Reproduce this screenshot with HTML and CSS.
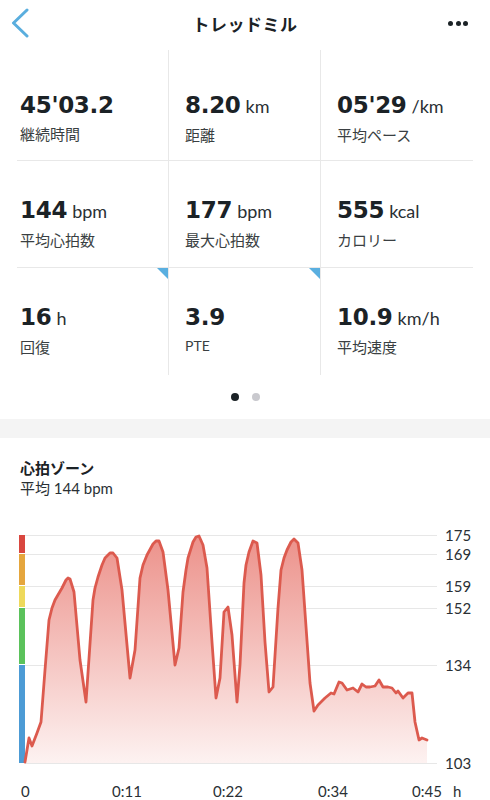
FILE: index.html
```html
<!DOCTYPE html>
<html>
  <head>
    <title>トレッドミル</title>
    <meta name="viewport" content="width=device-width, initial-scale=1" />
    <link rel="stylesheet" href="styles.css">
  </head>
  <body>
    <header class="topbar">
      <div class="back">
        <svg width="19" height="30" viewBox="0 0 19 30">
          <polyline points="16,2 2.5,15 16,28" fill="none" stroke="#5aaede" stroke-width="3" stroke-linecap="round" stroke-linejoin="round" />
        </svg>
      </div>
      <h1 class="title">トレッドミル</h1>
      <div class="more"><span></span><span></span><span></span></div>
    </header>

    <div class="stats">
      <div class="cell top"><div class="value">45'03.2</div><div class="label">継続時間</div></div>
      <div class="cell top"><div class="value">8.20<span class="unit">km</span></div><div class="label">距離</div></div>
      <div class="cell top last"><div class="value">05'29<span class="unit">/km</span></div><div class="label">平均ペース</div></div>

      <div class="cell"><div class="value">144<span class="unit">bpm</span></div><div class="label">平均心拍数</div></div>
      <div class="cell"><div class="value">177<span class="unit">bpm</span></div><div class="label">最大心拍数</div></div>
      <div class="cell last"><div class="value">555<span class="unit">kcal</span></div><div class="label">カロリー</div></div>

      <div class="cell bottom flag"><div class="value">16<span class="unit">h</span></div><div class="label">回復</div></div>
      <div class="cell bottom flag"><div class="value">3.9</div><div class="label latin">PTE</div></div>
      <div class="cell bottom last"><div class="value">10.9<span class="unit">km/h</span></div><div class="label">平均速度</div></div>
    </div>

    <div class="pager"><span class="dot on"></span><span class="dot"></span></div>
    <div class="band"></div>

    <section class="zones">
      <h2 class="zones-title">心拍ゾーン</h2>
      <div class="zones-sub">平均 144 bpm</div>
    </section>

    <svg class="chart" width="490" height="300" viewBox="0 500 490 300">
      <defs>
        <linearGradient id="fill" gradientUnits="userSpaceOnUse" x1="0" y1="535" x2="0" y2="763">
          <stop offset="0" stop-color="#ec918a" />
          <stop offset="1" stop-color="#fdf2f1" />
        </linearGradient>
      </defs>

      <!-- grid lines -->
      <g stroke="#e7e7e7" stroke-width="1">
        <line x1="25" y1="535.5" x2="437" y2="535.5" />
        <line x1="25" y1="554.5" x2="437" y2="554.5" />
        <line x1="25" y1="586.5" x2="437" y2="586.5" />
        <line x1="25" y1="608.5" x2="437" y2="608.5" />
        <line x1="25" y1="665.5" x2="437" y2="665.5" />
        <line x1="25" y1="763.5" x2="437" y2="763.5" />
      </g>

      <!-- zone bar -->
      <rect x="19" y="535" width="6" height="18" fill="#d9473f" />
      <rect x="19" y="554" width="6" height="31" fill="#e5a63d" />
      <rect x="19" y="586" width="6" height="21" fill="#eed95b" />
      <rect x="19" y="608" width="6" height="56" fill="#5bc25b" />
      <rect x="19" y="665" width="6" height="98" fill="#4c9bd5" />

      <polygon fill="url(#fill)" points="25,762 29,738 32,746 37,733 41,722 45,670 49,620 52,608 55,600 62,588 66,580 68,578 70,579 74,592 80,660 86,702 93,600 95,588 98,577 102,565 105,558 110,553 113,553 117,558 122,590 130,678 135,650 140,578 143,565 147,555 153,544 156,541 159,541 163,552 168,590 175,665 179,648 183,592 186,570 188,558 193,542 196,537 199,536 203,545 207,568 212,642 216,698 220,678 224,612 228,607 232,635 237,702 240,665 244,583 246,565 249,552 253,541 257,543 261,575 265,642 269,692 273,687 278,608 281,570 284,558 287,550 291,542 294,539 298,543 302,570 310,683 314,711 318,705 325,698 331,693 334,694 339,682 342,683 347,690 353,688 358,692 362,684 366,687 370,687 375,686 379,680 383,687 388,687 392,688 396,693 398,691 403,698 408,693 412,693 415,722 419,740 422,738 427,740 427,763 25,763" />
      <polyline fill="none" stroke="#dc5a4e" stroke-width="2.8" stroke-linejoin="round" stroke-linecap="round" points="25,762 29,738 32,746 37,733 41,722 45,670 49,620 52,608 55,600 62,588 66,580 68,578 70,579 74,592 80,660 86,702 93,600 95,588 98,577 102,565 105,558 110,553 113,553 117,558 122,590 130,678 135,650 140,578 143,565 147,555 153,544 156,541 159,541 163,552 168,590 175,665 179,648 183,592 186,570 188,558 193,542 196,537 199,536 203,545 207,568 212,642 216,698 220,678 224,612 228,607 232,635 237,702 240,665 244,583 246,565 249,552 253,541 257,543 261,575 265,642 269,692 273,687 278,608 281,570 284,558 287,550 291,542 294,539 298,543 302,570 310,683 314,711 318,705 325,698 331,693 334,694 339,682 342,683 347,690 353,688 358,692 362,684 366,687 370,687 375,686 379,680 383,687 388,687 392,688 396,693 398,691 403,698 408,693 412,693 415,722 419,740 422,738 427,740" />

      <!-- y axis -->
      <g class="axis">
        <text x="445" y="541">175</text>
        <text x="445" y="560">169</text>
        <text x="445" y="592">159</text>
        <text x="445" y="614">152</text>
        <text x="445" y="671">134</text>
        <text x="445" y="769">103</text>
      </g>

      <!-- x axis -->
      <g class="axis">
        <text x="21" y="797">0</text>
        <text x="127" y="797" text-anchor="middle">0:11</text>
        <text x="228" y="797" text-anchor="middle">0:22</text>
        <text x="333" y="797" text-anchor="middle">0:34</text>
        <text x="427" y="797" text-anchor="middle">0:45</text>
        <text x="453" y="797">h</text>
      </g>
    </svg>
  </body>
</html>
```

FILE: styles.css
```css
/* Base */
body {
  margin: 0;
  background: #fff;
  color: #1b2226;
  font-family: "Lato", "Noto Sans CJK JP", sans-serif;
}

/* Top bar */
.topbar {
  display: grid;
  grid-template-columns: 1fr auto 1fr;
  align-items: center;
  height: 46px;
}

.back {
  padding-left: 11px;
  height: 30px;
}

.back svg {
  display: block;
}

.title {
  margin: 0;
  font-family: "Noto Sans CJK JP", sans-serif;
  font-size: 17px;
  font-weight: 700;
  letter-spacing: 0.5px;
}

.more {
  display: flex;
  justify-content: flex-end;
  gap: 2.5px;
  padding-right: 22px;
}

.more span {
  width: 5px;
  height: 5px;
  border-radius: 50%;
  background: #1b2226;
}

/* Stats grid */
.stats {
  display: grid;
  grid-template-columns: repeat(3, 152px);
  grid-template-rows: 111px 107px 107px;
  margin: 4px 0 0 17px;
}

.cell {
  position: relative;
  padding: 35px 0 0 16px;
  border-right: 1px solid #e8e8e8;
  border-bottom: 1px solid #e8e8e8;
}

.cell:nth-child(3n + 1) {
  padding-left: 3px;
}

.cell.top {
  padding-top: 41px;
}

.cell.last {
  border-right: none;
}

.cell.bottom {
  border-bottom: none;
}

.cell.flag::after {
  content: "";
  position: absolute;
  top: 0;
  right: 0;
  width: 11px;
  height: 11px;
  background: #5aafe0;
  clip-path: polygon(0 0, 100% 0, 100% 100%);
}

.value {
  font-family: "DejaVu Sans", sans-serif;
  font-size: 23px;
  line-height: 28px;
  font-weight: 700;
  letter-spacing: -0.3px;
  white-space: nowrap;
}

.unit {
  margin-left: 5px;
  font-family: "Lato", sans-serif;
  font-size: 18px;
  font-weight: 400;
  letter-spacing: 0;
  color: #2a3034;
}

.label {
  margin-top: 5px;
  font-size: 15px;
  line-height: 20px;
  color: #3a3f42;
}

.label.latin {
  font-size: 14px;
}

/* Pager */
.pager {
  display: flex;
  justify-content: center;
  align-items: center;
  gap: 13px;
  height: 44px;
}

.dot {
  width: 8px;
  height: 8px;
  border-radius: 50%;
  background: #c9c9ce;
}

.dot.on {
  background: #1b2226;
}

.band {
  height: 19px;
  background: #f4f4f4;
}

/* Heart rate zones */
.zones {
  padding: 20px 20px 2px;
}

.zones-title {
  margin: 0;
  font-family: "Noto Sans CJK JP", sans-serif;
  font-size: 15px;
  line-height: 20px;
  font-weight: 700;
}

.zones-sub {
  font-size: 15px;
  line-height: 20px;
  color: #2a3034;
}

.chart {
  display: block;
}

.axis text {
  font-family: "Lato", sans-serif;
  font-size: 15px;
  fill: #2a3034;
}
```
